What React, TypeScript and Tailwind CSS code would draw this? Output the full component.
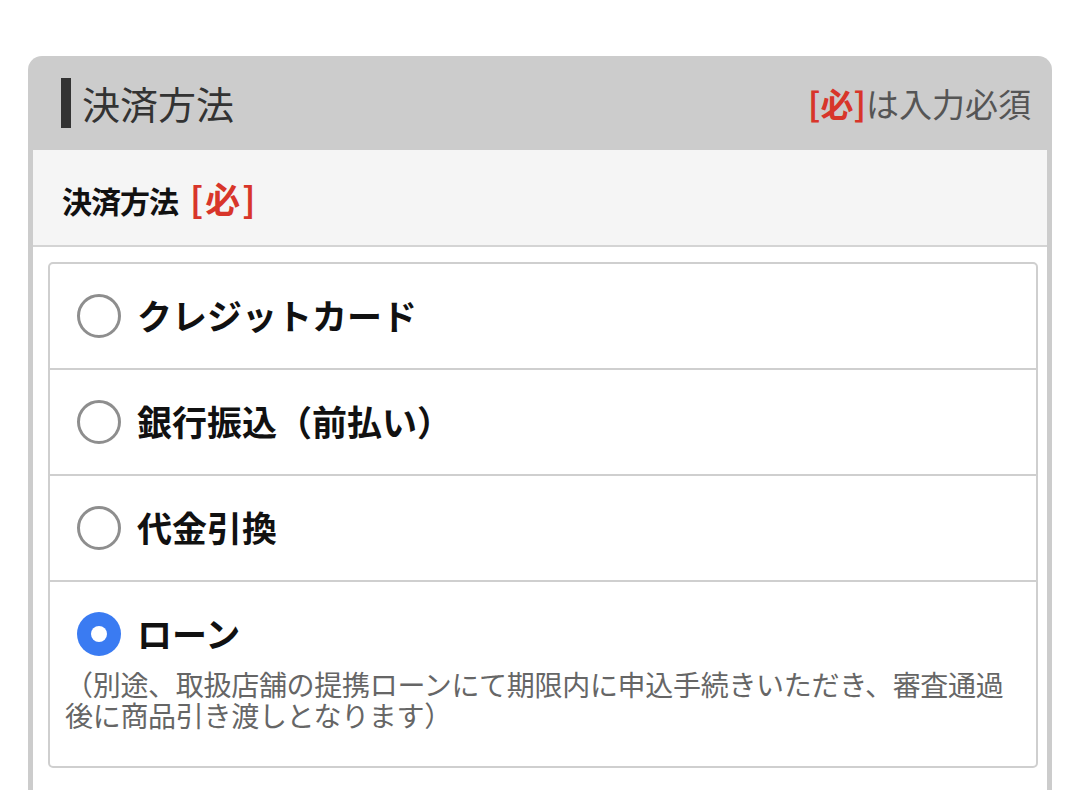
import { useState } from 'react';

const options = [
  { id: 'credit', label: 'クレジットカード' },
  { id: 'bank', label: '銀行振込（前払い）' },
  { id: 'cod', label: '代金引換' },
  {
    id: 'loan',
    label: 'ローン',
    note: '（別途、取扱店舗の提携ローンにて期限内に申込手続きいただき、審査通過後に商品引き渡しとなります）',
  },
];

function Radio({ checked }: { checked: boolean }) {
  return checked ? (
    <span className="flex h-[44px] w-[44px] shrink-0 items-center justify-center rounded-full bg-[#3a7bf2]">
      <span className="h-[16px] w-[16px] rounded-full bg-white" />
    </span>
  ) : (
    <span className="h-[44px] w-[44px] shrink-0 rounded-full border-[3px] border-[#8e8e8e] bg-white" />
  );
}

export default function App() {
  const [selected, setSelected] = useState('loan');

  return (
    <div className="min-h-[791px] bg-white pt-[56px] font-['Noto_Sans_CJK_JP',sans-serif]">
      <div className="mx-[28px] rounded-t-[14px] bg-[#cccccc] px-[5px]">
        {/* Header */}
        <div className="flex h-[94px] items-center justify-between pl-[28px] pr-[16px]">
          <div className="flex items-center gap-[11px]">
            <span className="h-[50px] w-[10px] bg-[#333333]" />
            <h2 className="text-[38px] leading-none text-[#333333]">決済方法</h2>
          </div>
          <p className="text-[33px] leading-none text-[#555555]">
            <span className="font-bold text-[#d8352a]">[必]</span>は入力必須
          </p>
        </div>

        {/* Field label */}
        <div className="flex h-[97px] items-center border-b-2 border-[#d4d4d4] bg-[#f5f5f5] pl-[29px]">
          <span className="text-[30px] font-bold leading-none tracking-[-1px] text-[#111111]">
            決済方法
            <span className="ml-[12px] text-[35px] tracking-[2px] text-[#d8352a]">[必]</span>
          </span>
        </div>

        {/* Options */}
        <div className="bg-white pb-[22px] pl-[15px] pr-[9px] pt-[15px]">
          <div className="overflow-hidden rounded-[5px] border-2 border-[#cfcfcf]">
            {options.map((opt, i) => (
              <label
                key={opt.id}
                onClick={() => setSelected(opt.id)}
                className={`block cursor-pointer px-[15px] ${i > 0 ? 'border-t-2 border-[#cfcfcf]' : ''} ${
                  opt.note ? 'pb-[35px] pt-[30px]' : 'py-[30px]'
                }`}
              >
                <div className="flex h-[44px] items-center gap-[16px] pl-[12px]">
                  <Radio checked={selected === opt.id} />
                  <span className="-mt-[4px] text-[35px] font-bold leading-none text-[#111111]">{opt.label}</span>
                </div>
                {opt.note && (
                  <p className="mt-[13px] max-w-[940px] text-[28px] leading-[31px] tracking-[-0.3px] text-[#666666]">
                    {opt.note}
                  </p>
                )}
              </label>
            ))}
          </div>
        </div>
      </div>
    </div>
  );
}
